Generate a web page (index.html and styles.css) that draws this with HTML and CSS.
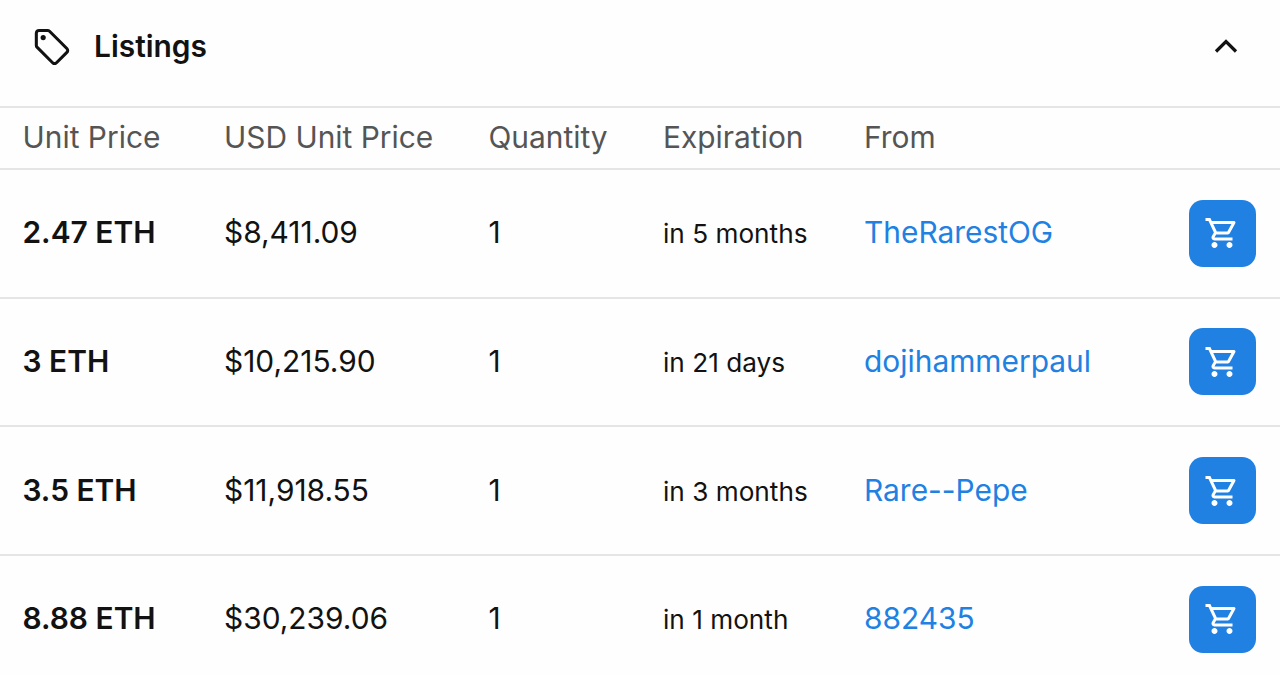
FILE: index.html
```html
<!DOCTYPE html>
<html lang="en">
<head>
<meta charset="utf-8">
<title>Listings</title>
<link rel="stylesheet" href="styles.css">
</head>
<body>
<section class="panel">
  <header class="head">
    <svg class="tag" viewBox="0 0 40 40" width="37" height="37" fill="none" stroke="#121212" stroke-width="3.3" stroke-linejoin="round"><path d="M3.6 5.6 C3.6 3.9 4.9 2.6 6.6 2.6 H15.6 C16.5 2.6 17.3 2.9 17.9 3.5 L36.6 22.2 C37.8 23.4 37.8 25.2 36.6 26.4 L25.4 37.6 C24.2 38.8 22.3 38.8 21.2 37.6 L4.6 21 C4 20.4 3.6 19.6 3.6 18.8 Z"/><circle cx="11" cy="10.4" r="2.8" fill="#121212" stroke="none"/></svg>
    <h2 class="title">Listings</h2>
    <svg class="chev" viewBox="0 0 24 14" width="24" height="14" fill="none" stroke="#121212" stroke-width="3.2"><path d="M2 12.5 L12 2.5 L22 12.5"/></svg>
  </header>
  <div class="row labels">
    <span>Unit Price</span><span>USD Unit Price</span><span class="qty">Quantity</span><span>Expiration</span><span>From</span><span></span>
  </div>
  <div class="row item">
    <b>2.47 ETH</b><span>$8,411.09</span><span class="qty">1</span><span class="exp">in 5 months</span><a>TheRarestOG</a>
    <button class="buy"><svg viewBox="0 0 24 24" width="36" height="36"><path d="M15.55 13c.75 0 1.41-.41 1.75-1.03l3.58-6.49c.37-.66-.11-1.48-.87-1.48H5.21l-.94-2H1v2h2l3.6 7.59-1.35 2.44C4.52 15.37 5.48 17 7 17h12v-2H7l1.1-2h7.45zM6.16 6h12.15l-2.76 5H8.53L6.16 6zM7 18c-1.1 0-1.99.9-1.99 2S5.9 22 7 22s2-.9 2-2-.9-2-2-2zm10 0c-1.1 0-1.99.9-1.99 2s.89 2 1.99 2 2-.9 2-2-.9-2-2-2z"/></svg></button>
  </div>
  <div class="row item">
    <b>3 ETH</b><span>$10,215.90</span><span class="qty">1</span><span class="exp">in 21 days</span><a>dojihammerpaul</a>
    <button class="buy"><svg viewBox="0 0 24 24" width="36" height="36"><path d="M15.55 13c.75 0 1.41-.41 1.75-1.03l3.58-6.49c.37-.66-.11-1.48-.87-1.48H5.21l-.94-2H1v2h2l3.6 7.59-1.35 2.44C4.52 15.37 5.48 17 7 17h12v-2H7l1.1-2h7.45zM6.16 6h12.15l-2.76 5H8.53L6.16 6zM7 18c-1.1 0-1.99.9-1.99 2S5.9 22 7 22s2-.9 2-2-.9-2-2-2zm10 0c-1.1 0-1.99.9-1.99 2s.89 2 1.99 2 2-.9 2-2-.9-2-2-2z"/></svg></button>
  </div>
  <div class="row item">
    <b>3.5 ETH</b><span>$11,918.55</span><span class="qty">1</span><span class="exp">in 3 months</span><a>Rare--Pepe</a>
    <button class="buy"><svg viewBox="0 0 24 24" width="36" height="36"><path d="M15.55 13c.75 0 1.41-.41 1.75-1.03l3.58-6.49c.37-.66-.11-1.48-.87-1.48H5.21l-.94-2H1v2h2l3.6 7.59-1.35 2.44C4.52 15.37 5.48 17 7 17h12v-2H7l1.1-2h7.45zM6.16 6h12.15l-2.76 5H8.53L6.16 6zM7 18c-1.1 0-1.99.9-1.99 2S5.9 22 7 22s2-.9 2-2-.9-2-2-2zm10 0c-1.1 0-1.99.9-1.99 2s.89 2 1.99 2 2-.9 2-2-.9-2-2-2z"/></svg></button>
  </div>
  <div class="row item">
    <b>8.88 ETH</b><span>$30,239.06</span><span class="qty">1</span><span class="exp">in 1 month</span><a>882435</a>
    <button class="buy"><svg viewBox="0 0 24 24" width="36" height="36"><path d="M15.55 13c.75 0 1.41-.41 1.75-1.03l3.58-6.49c.37-.66-.11-1.48-.87-1.48H5.21l-.94-2H1v2h2l3.6 7.59-1.35 2.44C4.52 15.37 5.48 17 7 17h12v-2H7l1.1-2h7.45zM6.16 6h12.15l-2.76 5H8.53L6.16 6zM7 18c-1.1 0-1.99.9-1.99 2S5.9 22 7 22s2-.9 2-2-.9-2-2-2zm10 0c-1.1 0-1.99.9-1.99 2s.89 2 1.99 2 2-.9 2-2-.9-2-2-2z"/></svg></button>
  </div>
</section>
</body>
</html>
```
FILE: styles.css
```css
html, body { margin: 0; padding: 0; height: 675px; overflow: hidden; background: #fefefe; }
body { font-family: Inter, "Liberation Sans", sans-serif; color: #121212; }
.panel { display: flex; flex-direction: column; }
.head { display: flex; align-items: center; height: 106px; padding: 0 24px 14px 32.5px; box-sizing: border-box; }
.tag { flex: none; margin-right: 24.5px; }
.title { flex: 1; margin: 0; font-size: 29.9px; font-weight: 600; line-height: 36px; }
.chev { flex: none; margin-right: 18px; }
.row { display: grid; grid-template-columns: 201.5px 264px 175px 201px 1fr 67px; align-items: center; padding: 0 24px 0 22.5px; font-size: 29.9px; border-top: 2px solid #e5e5e5; }
.labels { height: 58px; padding-bottom: 2px; color: #555; }
.item { height: 126.67px; }
.item b { font-weight: 600; margin-bottom: 2px; }
.item span, .item a { margin-bottom: 2px; }
.qty { padding-left: 0.5px; }
.item .exp { font-size: 26.2px; margin-bottom: 0; margin-top: 1px; }
.item a { color: #2081e2; }
.buy { width: 67px; height: 67px; display: flex; align-items: center; justify-content: center; padding: 0 2px 0 0; border: 0; border-radius: 14px; background: #2081e2; }
.buy svg { fill: #fff; }
```
